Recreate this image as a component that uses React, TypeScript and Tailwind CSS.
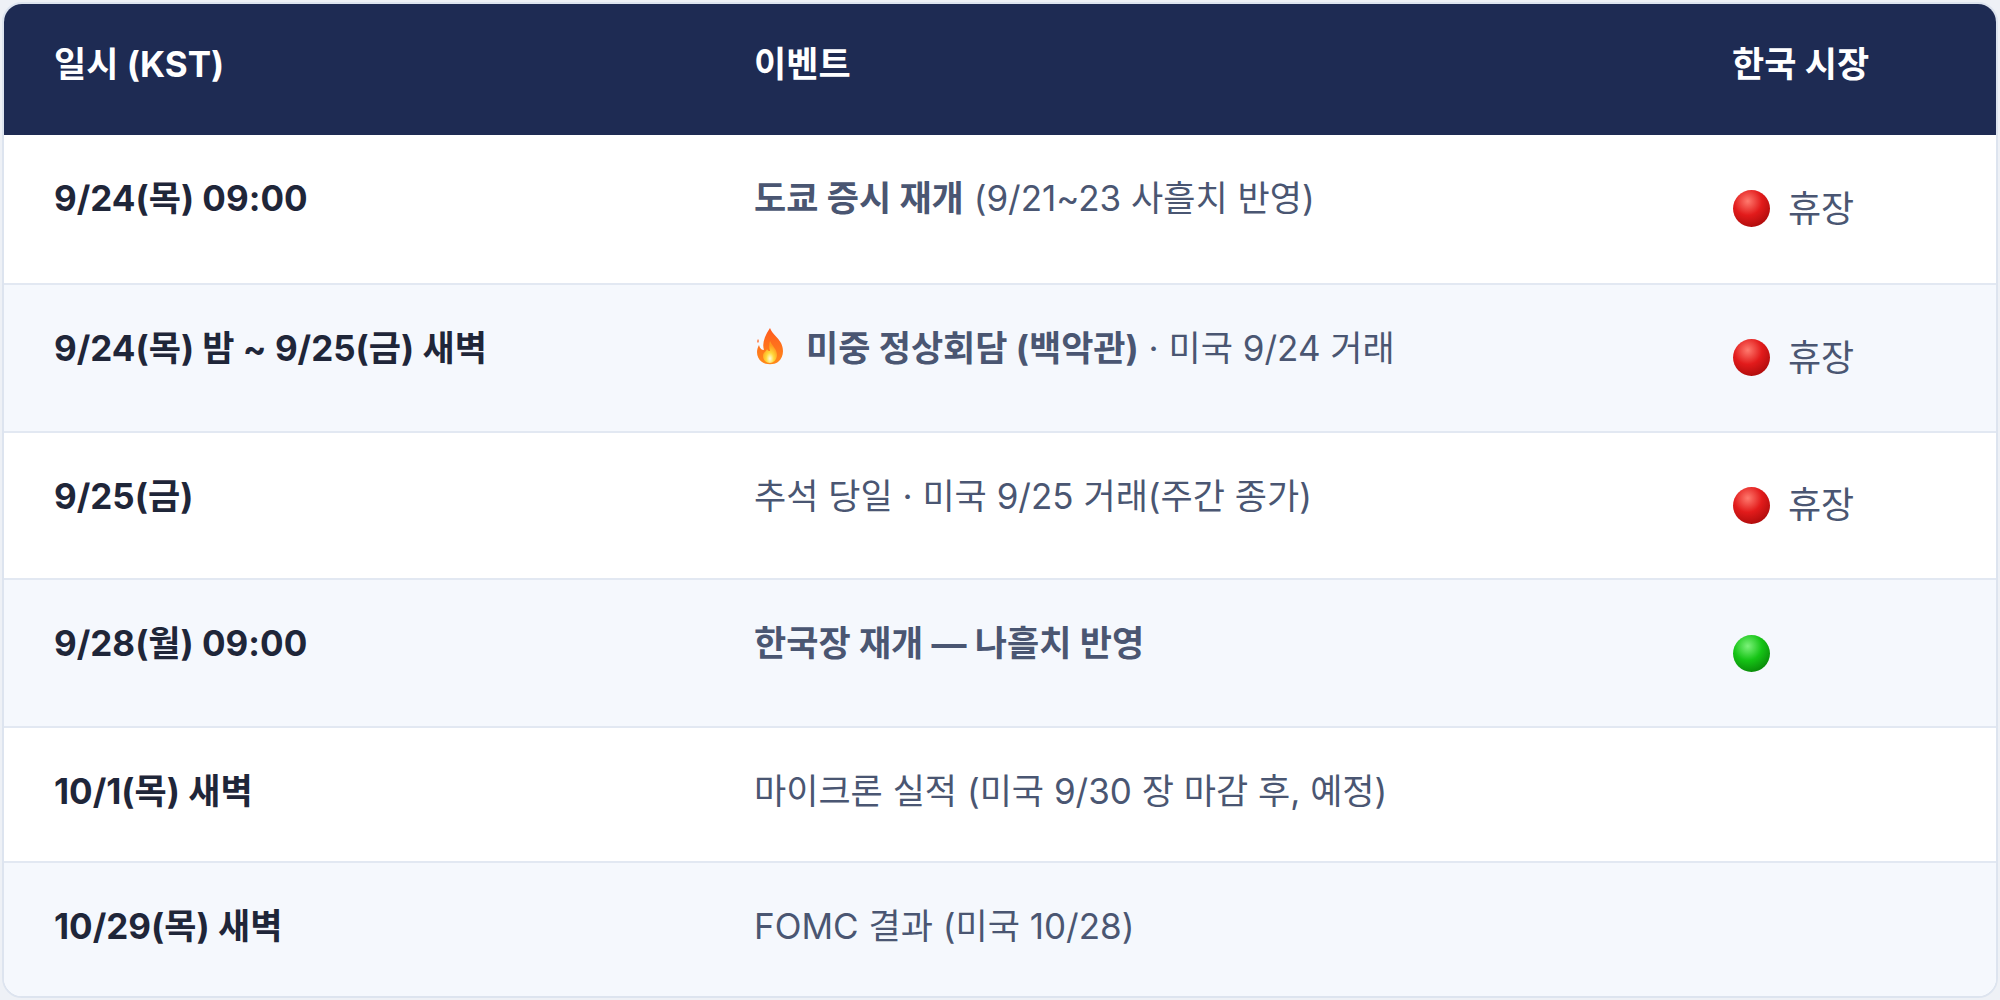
import React from "react";

type Row = {
  date: string;
  strong?: string;
  rest?: string;
  fire?: boolean;
  market?: "closed" | "open";
  tall: boolean;
};

const rows: Row[] = [
  { date: "9/24(목) 09:00", strong: "도쿄 증시 재개", rest: " (9/21~23 사흘치 반영)", market: "closed", tall: true },
  { date: "9/24(목) 밤 ~ 9/25(금) 새벽", strong: "미중 정상회담 (백악관)", rest: " · 미국 9/24 거래", fire: true, market: "closed", tall: true },
  { date: "9/25(금)", rest: "추석 당일 · 미국 9/25 거래(주간 종가)", market: "closed", tall: true },
  { date: "9/28(월) 09:00", strong: "한국장 재개 — 나흘치 반영", market: "open", tall: true },
  { date: "10/1(목) 새벽", rest: "마이크론 실적 (미국 9/30 장 마감 후, 예정)", tall: false },
  { date: "10/29(목) 새벽", rest: "FOMC 결과 (미국 10/28)", tall: false },
];

function Dot({ color }: { color: "red" | "green" }) {
  const id = color === "red" ? "dotRed" : "dotGreen";
  const stops =
    color === "red"
      ? ["#ff7a6e", "#e21b1b", "#b30d0d"]
      : ["#7cf27a", "#16c416", "#0a8f0a"];
  return (
    <svg width="39" height="39" viewBox="0 0 38 38" className="shrink-0">
      <defs>
        <radialGradient id={id} cx="40%" cy="30%" r="70%">
          <stop offset="0%" stopColor={stops[0]} />
          <stop offset="55%" stopColor={stops[1]} />
          <stop offset="100%" stopColor={stops[2]} />
        </radialGradient>
      </defs>
      <circle cx="19" cy="19" r="18" fill={`url(#${id})`} />
    </svg>
  );
}

function Fire() {
  return (
    <svg width="32" height="38" viewBox="0 0 32 38" className="inline-block mr-[20px] align-[-4px]">
      <defs>
        <linearGradient id="fireOuter" x1="0" y1="0" x2="0" y2="1">
          <stop offset="0%" stopColor="#ff5a1f" />
          <stop offset="100%" stopColor="#ff8a1a" />
        </linearGradient>
        <radialGradient id="fireInner" cx="50%" cy="80%" r="60%">
          <stop offset="0%" stopColor="#fffbe0" />
          <stop offset="45%" stopColor="#ffd93a" />
          <stop offset="100%" stopColor="#ff9a1e" />
        </radialGradient>
      </defs>
      <path
        d="M16 1 C18 7 24 10 27 16 C30 22 30 30 24 35 C20 38 12 38 8 35 C2 31 2 23 5 18 C6 22 8 23 10 23 C8 17 10 10 16 1 Z"
        fill="url(#fireOuter)"
      />
      <path d="M4 12 C3 14 3 15 4 16 C5 15 5 13 4 12 Z" fill="#ff6a2a" />
      <path
        d="M16 14 C18 19 23 22 23 28 C23 33 19 36 16 36 C12 36 9 33 9 29 C9 25 12 25 13 22 C14 24 15 24 16 24 C15 21 15 17 16 14 Z"
        fill="url(#fireInner)"
      />
    </svg>
  );
}

export default function App() {
  return (
    <div
      className="w-[2000px] h-[1000px] bg-[#eef1f6] p-[2px]"
      style={{ fontFamily: 'Inter, "Noto Sans CJK KR", sans-serif' }}
    >
      <div className="h-full rounded-[20px] border-2 border-[#dde4ef] bg-white overflow-hidden flex flex-col">
        <div className="grid grid-cols-[700px_978px_1fr] h-[131px] bg-[#1e2b53] items-center px-[50px] text-white font-bold text-[35px] pb-[11px]">
          <div>일시 (KST)</div>
          <div>이벤트</div>
          <div>한국 시장</div>
        </div>
        {rows.map((r, i) => (
          <div
            key={i}
            className={`grid grid-cols-[700px_978px_1fr] px-[50px] ${r.tall ? "h-[148px]" : "h-[135px]"} ${
              i % 2 === 1 ? "bg-[#f5f8fd]" : "bg-white"
            } ${i > 0 ? "border-t-2 border-[#e2e8f2]" : ""}`}
          >
            <div className="self-start pt-[36px] leading-[54px] text-[35px] font-bold text-[#1f2639] whitespace-nowrap">
              {r.date}
            </div>
            <div className="self-start pt-[36px] leading-[54px] text-[35px] text-[#4a5672] whitespace-nowrap">
              {r.fire && <Fire />}
              {r.strong && <span className="font-bold">{r.strong}</span>}
              {r.rest && <span>{r.rest}</span>}
            </div>
            <div className="self-center flex items-center gap-[17px] text-[36px] text-[#4a5672]">
              {r.market === "closed" && (
                <>
                  <Dot color="red" />
                  <span>휴장</span>
                </>
              )}
              {r.market === "open" && <Dot color="green" />}
            </div>
          </div>
        ))}
      </div>
    </div>
  );
}
